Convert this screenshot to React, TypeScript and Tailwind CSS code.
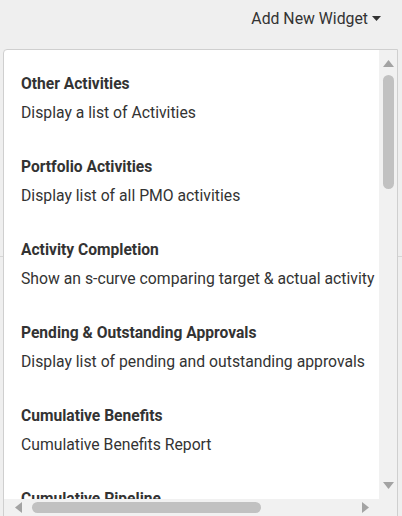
import React from "react";

interface Widget {
  title: string;
  description: string;
}

const widgets: Widget[] = [
  { title: "Other Activities", description: "Display a list of Activities" },
  { title: "Portfolio Activities", description: "Display list of all PMO activities" },
  { title: "Activity Completion", description: "Show an s-curve comparing target & actual activity" },
  { title: "Pending & Outstanding Approvals", description: "Display list of pending and outstanding approvals" },
  { title: "Cumulative Benefits", description: "Cumulative Benefits Report" },
  { title: "Cumulative Pipeline", description: "Cumulative Pipeline Report" },
];

export default function App() {
  return (
    <div className="relative h-[516px] w-[402px] overflow-hidden bg-[#efefef] font-['Roboto',sans-serif] text-[#333]">
      {/* page behind the dropdown */}
      <div className="flex h-[49px] justify-end pr-[21px] pt-[8px]">
        <button type="button" className="flex h-[21px] items-center gap-[4px] text-[15.8px] text-[#333]">
          Add New Widget
          <svg width="9" height="5" viewBox="0 0 9 5">
            <path d="M0 0h9L4.5 5z" fill="#333" />
          </svg>
        </button>
      </div>
      <div className="h-[208px] border-b border-[#d6d6d6]" />

      {/* dropdown panel */}
      <div className="absolute left-[3px] top-[49px] flex h-[468px] w-[395px] flex-col overflow-hidden rounded-tl-[4px] border border-[#cfcfcf] bg-white">
        <div className="flex min-h-0 flex-1">
          <div className="min-w-0 flex-1 overflow-hidden">
            {widgets.map((widget) => (
              <div key={widget.title} className="h-[83px] whitespace-nowrap pl-[17px] pt-[24px]">
                <div className="h-[20px] text-[15.6px] leading-[20px] font-bold text-[#333]">{widget.title}</div>
                <div className="mt-[9px] h-[20px] text-[15.75px] leading-[20px] text-[#333]">{widget.description}</div>
              </div>
            ))}
          </div>
          {/* vertical scrollbar */}
          <div className="flex w-[18px] shrink-0 flex-col items-center bg-[#f1f1f1]">
            <svg className="mt-[10px]" width="11" height="7" viewBox="0 0 11 7">
              <path d="M0 7L5.5 0L11 7z" fill="#a3a3a3" />
            </svg>
            <div className="mt-[8px] h-[114px] w-[11px] rounded-full bg-[#c1c1c1]" />
            <div className="flex-1" />
            <svg className="mb-[10px]" width="11" height="7" viewBox="0 0 11 7">
              <path d="M0 0h11L5.5 7z" fill="#a3a3a3" />
            </svg>
          </div>
        </div>
        {/* horizontal scrollbar */}
        <div className="flex h-[17px] shrink-0 items-center bg-[#f1f1f1] pr-[18px]">
          <svg className="ml-[11px]" width="7" height="11" viewBox="0 0 7 11">
            <path d="M7 0v11L0 5.5z" fill="#a3a3a3" />
          </svg>
          <div className="ml-[10px] h-[11px] w-[229px] rounded-full bg-[#c1c1c1]" />
          <div className="flex-1" />
          <svg className="mr-[10px]" width="7" height="11" viewBox="0 0 7 11">
            <path d="M0 0v11L7 5.5z" fill="#a3a3a3" />
          </svg>
        </div>
      </div>
    </div>
  );
}
